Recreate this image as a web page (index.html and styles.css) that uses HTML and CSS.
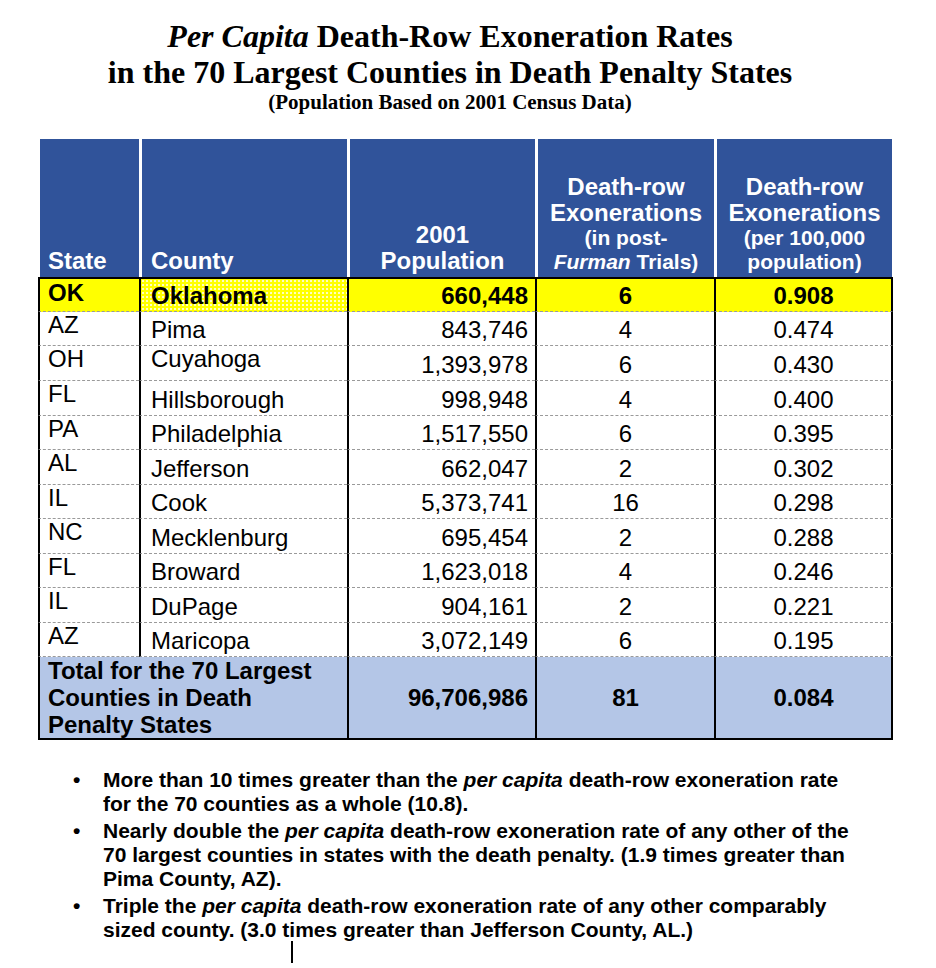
FILE: index.html
```html
<!DOCTYPE html>
<html>
<head>
<meta charset="utf-8">
<link rel="stylesheet" href="styles.css">
</head>
<body>
<div class="page">
  <div class="title">
    <h1 class="title-line"><i>Per Capita</i> Death-Row Exoneration Rates</h1>
    <h1 class="title-line">in the 70 Largest Counties in Death Penalty States</h1>
    <p class="sub">(Population Based on 2001 Census Data)</p>
  </div>

  <table class="rates">
    <thead>
      <tr class="head-row">
        <th class="h-state">State</th>
        <th class="h-county">County</th>
        <th class="h-pop">2001<br>Population</th>
        <th class="h-exo">Death-row<br>Exonerations<span class="small">(in post-</span><span class="small"><i>Furman</i> Trials)</span></th>
        <th class="h-rate">Death-row<br>Exonerations<span class="small">(per 100,000</span><span class="small">population)</span></th>
      </tr>
    </thead>
    <tbody>
      <tr class="hl">
        <td class="state">OK</td><td class="county dotted">Oklahoma</td><td class="num">660,448</td><td class="mid">6</td><td class="mid last">0.908</td>
      </tr>
      <tr>
        <td class="state">AZ</td><td class="county">Pima</td><td class="num">843,746</td><td class="mid">4</td><td class="mid last">0.474</td>
      </tr>
      <tr>
        <td class="state">OH</td><td class="county raised">Cuyahoga</td><td class="num">1,393,978</td><td class="mid">6</td><td class="mid last">0.430</td>
      </tr>
      <tr>
        <td class="state">FL</td><td class="county">Hillsborough</td><td class="num">998,948</td><td class="mid">4</td><td class="mid last">0.400</td>
      </tr>
      <tr>
        <td class="state">PA</td><td class="county">Philadelphia</td><td class="num">1,517,550</td><td class="mid">6</td><td class="mid last">0.395</td>
      </tr>
      <tr>
        <td class="state">AL</td><td class="county">Jefferson</td><td class="num">662,047</td><td class="mid">2</td><td class="mid last">0.302</td>
      </tr>
      <tr>
        <td class="state">IL</td><td class="county">Cook</td><td class="num">5,373,741</td><td class="mid">16</td><td class="mid last">0.298</td>
      </tr>
      <tr>
        <td class="state">NC</td><td class="county">Mecklenburg</td><td class="num">695,454</td><td class="mid">2</td><td class="mid last">0.288</td>
      </tr>
      <tr>
        <td class="state">FL</td><td class="county">Broward</td><td class="num">1,623,018</td><td class="mid">4</td><td class="mid last">0.246</td>
      </tr>
      <tr>
        <td class="state">IL</td><td class="county">DuPage</td><td class="num">904,161</td><td class="mid">2</td><td class="mid last">0.221</td>
      </tr>
      <tr>
        <td class="state">AZ</td><td class="county">Maricopa</td><td class="num">3,072,149</td><td class="mid">6</td><td class="mid last">0.195</td>
      </tr>
      <tr class="total">
        <td class="total-label" colspan="2">Total for the 70 Largest Counties in Death Penalty States</td>
        <td class="num total-num">96,706,986</td>
        <td class="mid total-num">81</td>
        <td class="mid total-num last">0.084</td>
      </tr>
    </tbody>
  </table>

  <ul class="notes">
    <li><span class="dot">•</span><span class="note-text">More than 10 times greater than the <i>per capita</i> death-row exoneration rate for the 70 counties as a whole (10.8).</span></li>
    <li><span class="dot">•</span><span class="note-text">Nearly double the <i>per capita</i> death-row exoneration rate of any other of the 70 largest counties in states with the death penalty. (1.9 times greater than Pima County, AZ).</span></li>
    <li><span class="dot">•</span><span class="note-text">Triple the <i>per capita</i> death-row exoneration rate of any other comparably sized county. (3.0 times greater than Jefferson County, AL.)</span></li>
  </ul>
  <div class="caret"></div>
</div>
</body>
</html>
```

FILE: styles.css
```css
html, body {
  margin: 0;
  padding: 0;
  background: #ffffff;
}

body {
  color: #000;
  font-family: "Liberation Sans", Arial, sans-serif;
}

.page {
  padding-top: 18px;
}

.title {
  width: 900px;
  text-align: center;
  font-family: "Liberation Serif", "Times New Roman", serif;
  font-weight: bold;
}

.title-line {
  margin: 0;
  font-size: 32px;
  line-height: 36px;
  font-weight: bold;
}

.sub {
  margin: 0;
  font-size: 21px;
  line-height: 24px;
}

.rates {
  margin: 25px 0 0 38px;
  width: 855px;
  table-layout: fixed;
  border-collapse: separate;
  border-spacing: 0;
  font-size: 24px;
}

.head-row {
  height: 138px;
}

.rates th {
  box-sizing: border-box;
  background: #30539a;
  color: #fff;
  font-weight: bold;
  font-size: 24px;
  line-height: 26px;
  vertical-align: bottom;
  text-align: center;
  padding: 0 2px 3px;
  border-left: 3px solid #fff;
}

.rates th.h-state {
  width: 101px;
  border-left: 2px solid #fff;
  text-align: left;
  padding-left: 8px;
}

.rates th.h-county {
  width: 208px;
  text-align: left;
  padding-left: 9px;
}

.rates th.h-pop {
  width: 188px;
}

.rates th.h-exo {
  width: 179px;
}

.rates th.h-rate {
  width: 179px;
  border-right: 1px solid #fff;
}

.small {
  display: block;
  font-size: 21px;
  line-height: 24px;
}

.rates td {
  box-sizing: border-box;
  height: 34.5px;
  padding: 0 8px 2px;
  line-height: 26px;
  vertical-align: bottom;
  border-left: 2px solid #000;
  border-bottom: 1px dashed #9a9a9a;
  white-space: nowrap;
}

.rates td.last {
  border-right: 2px solid #000;
}

.rates tbody tr:first-child td {
  border-top: 2px solid #000;
}

.rates td.state {
  vertical-align: top;
  padding-top: 0;
  padding-left: 8px;
}

.rates td.county {
  padding-left: 10px;
}

.rates td.raised {
  padding-bottom: 8px;
}

.rates td.num {
  text-align: right;
  padding-right: 7px;
}

.rates td.mid {
  text-align: center;
}

.hl td {
  background: #ffff00;
  font-weight: bold;
}

.hl td.state {
  padding-top: 1px;
}

.hl td.dotted {
  background-color: #ffff00;
  background-image: radial-gradient(circle, rgba(255, 255, 255, 0.75) 0.9px, rgba(255, 255, 255, 0) 1.3px);
  background-size: 4px 4px;
}

.total td {
  background: #b4c6e7;
  font-weight: bold;
  height: 82px;
  border-bottom: 2px solid #000;
  vertical-align: middle;
  padding-bottom: 0;
  white-space: normal;
}

.total td.total-label {
  vertical-align: top;
  line-height: 27px;
  padding: 0 8px;
}

.notes {
  list-style: none;
  margin: 28px 0 0 73px;
  padding: 0;
  width: 790px;
  font-size: 21px;
  font-weight: bold;
  line-height: 24px;
}

.notes li {
  display: flex;
  margin-bottom: 3px;
}

.notes li:last-child {
  margin-bottom: 0;
}

.dot {
  flex: 0 0 30px;
}

.note-text {
  flex: 1 1 auto;
}

.caret {
  width: 2px;
  height: 22px;
  margin: -1px 0 0 291px;
  background: #000;
}
```
